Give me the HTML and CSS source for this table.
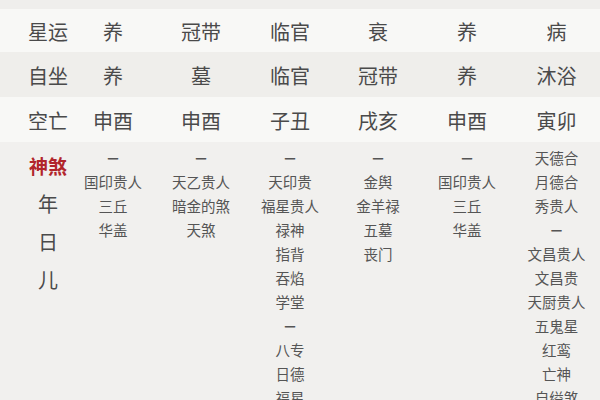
FILE: index.html
```html
<!DOCTYPE html>
<html lang="zh">
<head>
<meta charset="utf-8">
<link rel="stylesheet" href="styles.css">
</head>
<body>
<div class="table">
  <div class="strip"></div>
  <div class="row light r1">
    <div class="cell label">星运</div><div class="cell">养</div><div class="cell">冠带</div><div class="cell">临官</div><div class="cell">衰</div><div class="cell">养</div><div class="cell">病</div>
  </div>
  <div class="row gray">
    <div class="cell label">自坐</div><div class="cell">养</div><div class="cell">墓</div><div class="cell">临官</div><div class="cell">冠带</div><div class="cell">养</div><div class="cell">沐浴</div>
  </div>
  <div class="row light">
    <div class="cell label">空亡</div><div class="cell">申酉</div><div class="cell">申酉</div><div class="cell">子丑</div><div class="cell">戌亥</div><div class="cell">申酉</div><div class="cell">寅卯</div>
  </div>
  <div class="row shensha">
    <div class="side">
      <div class="title">神煞</div>
      <div>年</div>
      <div>日</div>
      <div>儿</div>
    </div>
    <div class="list"><div class="dash">－</div><div>国印贵人</div><div>三丘</div><div>华盖</div></div>
    <div class="list"><div class="dash">－</div><div>天乙贵人</div><div>暗金的煞</div><div>天煞</div></div>
    <div class="list"><div class="dash">－</div><div>天印贵</div><div>福星贵人</div><div>禄神</div><div>指背</div><div>吞焰</div><div>学堂</div><div class="dash">－</div><div>八专</div><div>日德</div><div>福星</div></div>
    <div class="list"><div class="dash">－</div><div>金舆</div><div>金羊禄</div><div>五墓</div><div>丧门</div></div>
    <div class="list"><div class="dash">－</div><div>国印贵人</div><div>三丘</div><div>华盖</div></div>
    <div class="list"><div>天德合</div><div>月德合</div><div>秀贵人</div><div class="dash">－</div><div>文昌贵人</div><div>文昌贵</div><div>天厨贵人</div><div>五鬼星</div><div>红鸾</div><div>亡神</div><div>自缢煞</div></div>
  </div>
</div>
</body>
</html>
```

FILE: styles.css
```css
html, body {
  margin: 0;
  padding: 0;
  width: 600px;
  height: 400px;
  overflow: hidden;
  background: #f1f0ee;
  font-family: "Noto Sans CJK SC", "Noto Sans", sans-serif;
}
.table {
  display: flex;
  flex-direction: column;
}
.strip {
  height: 9px;
  background: #efeeec;
}
.row {
  display: grid;
  grid-template-columns: 69px 88px 88px 90px 86px 92px 87px;
  height: 45px;
  align-items: center;
  color: #4a4a4a;
  font-size: 20px;
}
.r1 {
  height: 43px;
}
.light {
  background: #f8f8f6;
}
.gray {
  background: #efeeeb;
}
.cell {
  text-align: center;
  line-height: 24px;
  padding-top: 3px;
}
.label {
  padding-left: 27px;
}
.shensha {
  height: auto;
  align-items: start;
  background: #f1f0ee;
  padding-top: 4px;
}
.side {
  padding-left: 27px;
  padding-top: 1px;
  text-align: center;
  line-height: 38px;
  font-size: 20px;
  color: #4a4a4a;
}
.title {
  color: #b1252b;
  font-weight: bold;
  font-size: 19px;
}
.list {
  text-align: center;
  font-size: 14.5px;
  line-height: 24px;
  color: #555;
  white-space: nowrap;
}
.dash {
  font-weight: bold;
}
```
